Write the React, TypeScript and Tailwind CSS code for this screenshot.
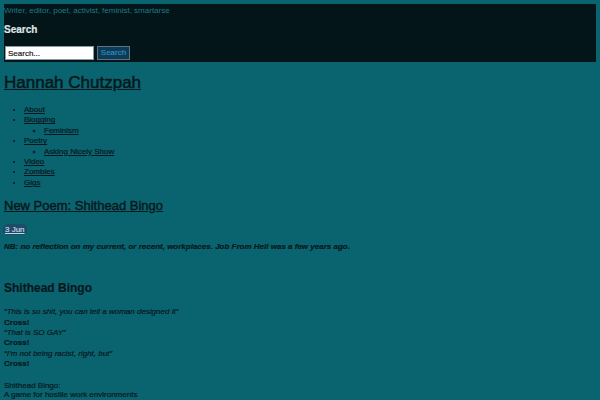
import React from 'react'

const navItems = [
  { label: 'About' },
  { label: 'Blogging', children: ['Feminism'] },
  { label: 'Poetry', children: ['Asking Nicely Show'] },
  { label: 'Video' },
  { label: 'Zombies' },
  { label: 'Gigs' },
]

const bingo = [
  { quote: '“This is so shit, you can tell a woman designed it”' },
  { quote: '“That is SO GAY”' },
  { quote: '“I’m not being racist, right, but”' },
]

export default function App() {
  return (
    <div className="min-h-screen bg-[#0a6470] p-[4px] font-['Liberation_Sans',Arial,sans-serif] text-[8px] text-[#07181d] [-webkit-text-stroke:0.2px]">
      <header className="bg-[#031518] pb-[2px]">
        <p className="pt-[1px] text-[8px] leading-[12px] text-[#1b7b89] [-webkit-text-stroke:0px]">
          Writer, editor, poet, activist, feminist, smartarse
        </p>
        <h3 className="mt-[7px] text-[10px] font-bold leading-[12px] text-[#dfe6e8]">Search</h3>
        <form className="mt-[10px] flex items-center gap-[3px]" onSubmit={(e) => e.preventDefault()}>
          <input
            type="text"
            placeholder="Search..."
            className="ml-[1px] h-[14px] w-[89px] border border-[#8a9aa0] bg-white px-[2px] text-[8px] text-[#111] placeholder:text-[#222] outline-none"
          />
          <button
            type="submit"
            className="h-[14px] w-[33px] border border-[#5b7380] bg-[#0e3a55] text-[8px] leading-none text-[#2b8bbd]"
          >
            Search
          </button>
        </form>
      </header>

      <h1 className="mt-[11px] text-[17px] leading-[20px] [-webkit-text-stroke:0.5px]">
        <a href="#" className="underline">Hannah Chutzpah</a>
      </h1>

      <ul className="mt-[12px] list-disc pl-[20px] leading-[10.4px]">
        {navItems.map((item) => (
          <li key={item.label}>
            <a href="#" className="underline">{item.label}</a>
            {item.children && (
              <ul className="list-[circle] pl-[20px]">
                {item.children.map((child) => (
                  <li key={child}>
                    <a href="#" className="underline">{child}</a>
                  </li>
                ))}
              </ul>
            )}
          </li>
        ))}
      </ul>

      <h2 className="mt-[10px] text-[13px] leading-[16px] [-webkit-text-stroke:0.4px]">
        <a href="#" className="underline">New Poem: Shithead Bingo</a>
      </h2>

      <div className="mt-[9px] flex h-[12px] items-center">
        <a href="#" className="-ml-[1px] inline-block rounded-[5px] bg-[#1e4b69] px-[2px] py-[1px] leading-[9px] text-[#c4d6e4] underline">
          3 Jun
        </a>
      </div>

      <p className="mt-[7px] leading-[10px] font-bold italic">
        NB: no reflection on my current, or recent, workplaces. Job From Hell was a few years ago.
      </p>

      <h2 className="mt-[28px] text-[12px] font-bold leading-[16px]">Shithead Bingo</h2>

      <div className="mt-[11px] leading-[10.4px]">
        {bingo.map((b) => (
          <div key={b.quote}>
            <p className="italic">{b.quote}</p>
            <p className="font-bold">Cross!</p>
          </div>
        ))}
      </div>

      <div className="mt-[11px] leading-[9.5px]">
        <p>Shithead Bingo:</p>
        <p>A game for hostile work environments</p>
      </div>
    </div>
  )
}
